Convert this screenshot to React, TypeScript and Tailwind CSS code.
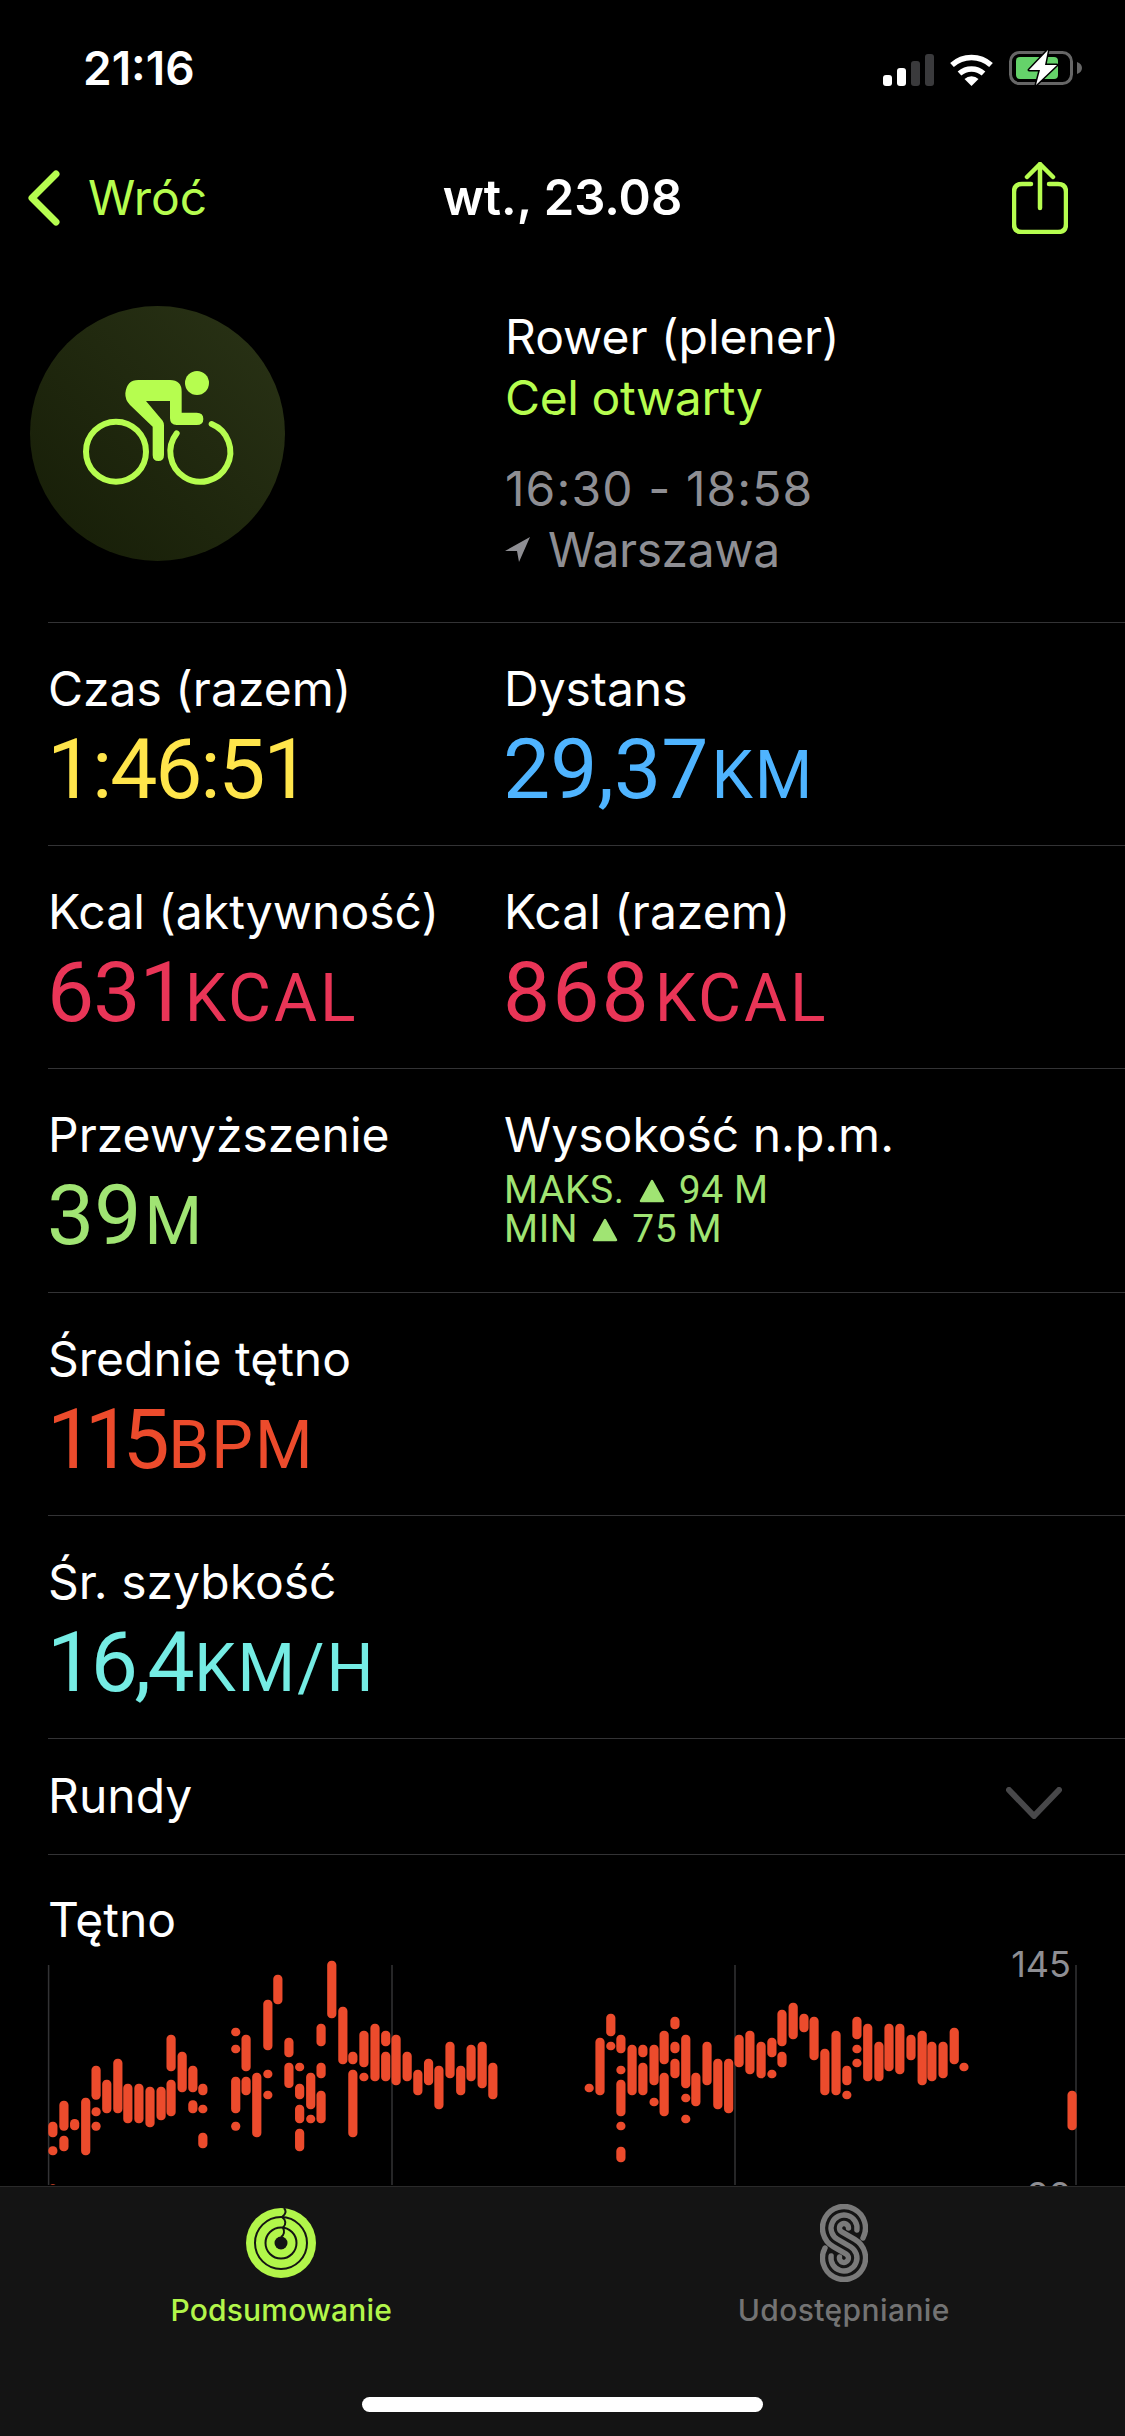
import React from 'react';

const left: [number, number, number][] = [
  [148, 548, 595], [148, 622, 649], [148, 736, 760], [179, 485, 575], [179, 590, 637], [209, 540, 574], [240, 476, 649],
  [269, 380, 482], [269, 505, 532], [269, 548, 575], [299, 422, 523], [330, 359, 523], [358, 434, 553],
  [389, 434, 553], [420, 443, 565], [451, 443, 544], [479, 287, 397], [479, 422, 532], [510, 338, 460],
  [540, 380, 460], [540, 484, 523], [568, 434, 469], [568, 497, 523], [568, 581, 628], [660, 266, 292],
  [660, 317, 343], [660, 413, 523], [660, 548, 575], [689, 287, 397], [689, 413, 469], [719, 401, 595],
  [750, 182, 334], [750, 392, 418], [750, 455, 481], [778, 107, 196], [809, 296, 355], [809, 371, 447],
  [839, 371, 397], [839, 434, 481], [839, 497, 553], [839, 569, 637], [870, 401, 511], [870, 527, 553],
  [899, 254, 322], [899, 371, 418], [899, 455, 553], [929, 65, 238], [960, 203, 376], [988, 338, 376],
  [988, 392, 595], [1019, 275, 385], [1019, 401, 427], [1050, 254, 427], [1080, 275, 322], [1080, 338, 427],
  [1109, 287, 439], [1140, 338, 427], [1170, 392, 469], [1200, 359, 439], [1229, 380, 511], [1260, 308, 418],
  [1290, 380, 469], [1319, 317, 427], [1350, 308, 448], [1380, 371, 481],
];

const right: [number, number, number][] = [
  [81, 434, 460], [111, 296, 469], [141, 224, 292], [141, 308, 334], [169, 287, 343], [169, 380, 406],
  [169, 422, 532], [169, 548, 574], [169, 623, 670], [200, 317, 469], [230, 317, 355], [230, 371, 469],
  [261, 317, 439], [261, 476, 502], [289, 275, 376], [289, 401, 532], [319, 233, 271], [319, 308, 343],
  [319, 359, 418], [349, 287, 448], [349, 464, 490], [349, 527, 553], [377, 401, 502], [408, 308, 439],
  [438, 359, 511], [468, 359, 523], [497, 287, 385], [527, 275, 406], [558, 308, 418], [588, 296, 355],
  [588, 392, 418], [616, 212, 322], [616, 338, 385], [647, 191, 301], [677, 224, 280], [705, 233, 364],
  [735, 329, 469], [766, 275, 469], [796, 380, 439], [796, 455, 481], [824, 233, 301], [824, 317, 343],
  [824, 359, 385], [854, 254, 427], [885, 308, 427], [913, 254, 397], [943, 254, 406], [974, 287, 364],
  [1005, 275, 439], [1032, 308, 427], [1063, 308, 418], [1094, 266, 376], [1121, 371, 397], [1421, 455, 574],
];

// bars in page coordinates
const bars = [
  ...left.map(([x, t, b]) => ({ x: x / 2.8, t: 1940 + t / 3, b: 1940 + b / 3 })),
  ...right.map(([x, t, b]) => ({ x: 560 + x / 2.775, t: 1940 + t / 3, b: 1940 + b / 3 })),
];

function Metric({
  label,
  value,
  unit,
  color,
  tight = 'tracking-[0px]',
  unitClass = 'ml-[3px] tracking-[2px]',
}: {
  label: string;
  value: string;
  unit?: string;
  color: string;
  tight?: string;
  unitClass?: string;
}) {
  return (
    <div>
      <div className="text-[48px] leading-[61px]">{label}</div>
      <div className={`ml-[-1px] mt-[9px] [font-family:Roboto,sans-serif] text-[84px] leading-[84px] ${tight} ${color}`}>
        {value}
        {unit && <span className={`text-[66px] ${unitClass}`}>{unit}</span>}
      </div>
    </div>
  );
}

function Row({ children }: { children: React.ReactNode }) {
  return (
    <div className="ml-[48px] grid h-[223.2px] grid-cols-[456px_1fr] border-t border-[#333335] pt-[35px]">
      {children}
    </div>
  );
}

function Triangle() {
  return (
    <svg width="26" height="24" viewBox="0 0 26 24" className="mx-[14px]">
      <path d="M13 2 L24 22 H2 Z" fill="#a0e473" stroke="#a0e473" strokeWidth="2.5" strokeLinejoin="round" />
    </svg>
  );
}

function StatusIcons() {
  return (
    <div className="flex items-end gap-[15px]">
      <svg width="51" height="32" viewBox="0 0 51 32">
        <rect x="0" y="21" width="9" height="11" rx="3" fill="#fff" />
        <rect x="14" y="14" width="9" height="18" rx="3" fill="#fff" />
        <rect x="28" y="7" width="9" height="25" rx="3" fill="#3a3a3c" />
        <rect x="42" y="0" width="9" height="32" rx="3" fill="#3a3a3c" />
      </svg>
      <svg width="45" height="32" viewBox="0 0 45 32">
        <path d="M3 11 A29 29 0 0 1 42 11" fill="none" stroke="#fff" strokeWidth="5.5" />
        <path d="M10.5 19.5 A18 18 0 0 1 34.5 19.5" fill="none" stroke="#fff" strokeWidth="5.5" />
        <path d="M22.5 32 L15.5 25 A10 10 0 0 1 29.5 25 Z" fill="#fff" />
      </svg>
      <svg width="73" height="35" viewBox="0 0 73 35" className="overflow-visible">
        <rect x="1.5" y="1.5" width="61" height="31" rx="9" fill="none" stroke="#666" strokeWidth="3" />
        <rect x="7" y="6" width="42" height="22" rx="4" fill="#65d26a" />
        <path d="M68 11 C71 12 73 14 73 17 C73 20 71 22 68 23 Z" fill="#666" />
        <path d="M39 -1 L20 19 H31 L27 34 L48 14 H36 Z" fill="#fff" stroke="#000" strokeWidth="3" paintOrder="stroke" strokeLinejoin="round" />
      </svg>
    </div>
  );
}

function BikeBadge() {
  return (
    <div className="flex size-[255px] shrink-0 items-center justify-center rounded-full bg-linear-to-tr from-[#161d07] to-[#2a3316]">
      <svg width="255" height="255" viewBox="90 78 765 765">
        <circle cx="348" cy="515" r="90" fill="none" stroke="#b6fd4f" strokeWidth="18" />
        <path d="M530 460 A90 90 0 1 0 635 432" fill="none" stroke="#b6fd4f" strokeWidth="18" strokeLinecap="round" />
        <circle cx="591" cy="309" r="36" fill="#b6fd4f" />
        <path
          d="M415 300 H510 Q545 300 545 335 V398 H590 Q610 398 610 417 Q610 435 590 435 H530 Q510 435 510 415 V363 H438 L488 422 Q492 428 492 436 V525 Q492 543 475 543 Q458 543 458 525 V440 L390 375 Q375 360 376 340 Q380 300 415 300 Z"
          fill="#b6fd4f"
        />
      </svg>
    </div>
  );
}

function RingIcon() {
  const gap = '#141414';
  return (
    <svg width="70" height="70" viewBox="0 0 70 70">
      <circle cx="35" cy="35" r="35" fill="#b2f64a" />
      <circle cx="35" cy="35" r="26" fill="none" stroke={gap} strokeWidth="2" />
      <circle cx="35" cy="35" r="15.5" fill="none" stroke={gap} strokeWidth="2" />
      <circle cx="35" cy="35" r="6.5" fill={gap} />
      <path d="M38 0 C40.5 3 40 6 36 9" fill="none" stroke={gap} strokeWidth="2" />
      <path d="M36 9 C40 12 40.5 16 37 19.5" fill="none" stroke={gap} strokeWidth="2" />
      <path d="M37 19.5 C39 24 38 27 35 29" fill="none" stroke={gap} strokeWidth="2" />
    </svg>
  );
}

function SharingIcon() {
  const paths = [
    'M43 34 A21.5 21.5 0 1 0 13.25 42.62 L26.25 50.1 A4.5 4.5 0 1 1 19.5 53',
    'M36.9 26 A13 13 0 1 0 17.5 35.26 L30.5 42.74 A13 13 0 1 1 11.1 52',
    'M28.5 24 A4.5 4.5 0 1 0 21.75 27.9 L34.75 35.38 A21.5 21.5 0 1 1 5 44',
  ];
  return (
    <svg width="48" height="78" viewBox="0 0 48 78">
      {paths.map(d => (
        <path key={d} d={d} fill="none" stroke="#7a7a7a" strokeWidth="5.4" strokeLinecap="round" />
      ))}
    </svg>
  );
}

export default function App() {
  return (
    <div className="relative h-[2436px] w-[1125px] overflow-hidden bg-black text-white [font-family:Inter,sans-serif]">
      {/* Status bar */}
      <div className="flex h-[136px] items-center justify-between pl-[83px] pr-[43px]">
        <span className="text-[46px] font-semibold">21:16</span>
        <StatusIcons />
      </div>

      {/* Nav */}
      <div className="grid h-[124px] grid-cols-[1fr_auto_1fr] items-center px-[28px]">
        <div className="flex items-center gap-[28px] text-[#b6fd4f]">
          <svg width="32" height="56" viewBox="0 0 32 56">
            <path d="M28 4 L4 28 L28 52" fill="none" stroke="#b6fd4f" strokeWidth="7" strokeLinecap="round" strokeLinejoin="round" />
          </svg>
          <span className="text-[48px]">Wróć</span>
        </div>
        <span className="text-[49px] font-semibold">wt., 23.08</span>
        <div className="flex justify-end pr-[29px]">
          <svg width="56" height="72" viewBox="0 0 56 72">
            <path d="M19 22 H10 Q2 22 2 30 V62 Q2 70 10 70 H46 Q54 70 54 62 V30 Q54 22 46 22 H37" fill="none" stroke="#b6fd4f" strokeWidth="4.5" strokeLinecap="round" />
            <path d="M28 46 V2 M15 15 L28 2 L41 15" fill="none" stroke="#b6fd4f" strokeWidth="4.5" strokeLinecap="round" strokeLinejoin="round" />
          </svg>
        </div>
      </div>

      {/* Workout header */}
      <div className="flex h-[362px] pl-[30px] pt-[46px]">
        <BikeBadge />
        <div className="ml-[220px] text-[48px] leading-[61px]">
          <div>Rower (plener)</div>
          <div className="tracking-[-0.4px] text-[#b6fd4f]">Cel otwarty</div>
          <div className="mt-[30px] tracking-[1.1px] text-[#8e8e93]">16:30 - 18:58</div>
          <div className="flex items-center gap-[18px] tracking-[-0.4px] text-[#8e8e93]">
            <svg width="25" height="25" viewBox="0 0 25 25">
              <path d="M25 0 L0 14 H12 L14 25 Z" fill="#8e8e93" />
            </svg>
            Warszawa
          </div>
        </div>
      </div>

      {/* Metrics */}
      <Row>
        <Metric label="Czas (razem)" value="1:46:51" color="text-[#ffe54b]" tight="tracking-[-2.2px]" />
        <Metric label="Dystans" value="29,37" unit="KM" color="text-[#4fb4ff]" />
      </Row>
      <Row>
        <Metric label="Kcal (aktywność)" value="631" unit="KCAL" color="text-[#e93557]" tight="tracking-[-1px]" unitClass="ml-[-1px] tracking-[3px]" />
        <Metric label="Kcal (razem)" value="868" unit="KCAL" color="text-[#e93557]" tight="tracking-[2px]" unitClass="ml-[4px] tracking-[3px]" />
      </Row>
      <Row>
        <Metric label="Przewyższenie" value="39" unit="M" color="text-[#a0e473]" />
        <div>
          <div className="text-[48px] leading-[61px]">Wysokość n.p.m.</div>
          <div className="mt-[6px] [font-family:Roboto,sans-serif] text-[39px] leading-[39px] tracking-[0.6px] text-[#a0e473]">
            <div className="flex items-center">MAKS.<Triangle />94 M</div>
            <div className="flex items-center">MIN<Triangle />75 M</div>
          </div>
        </div>
      </Row>
      <Row>
        <Metric label="Średnie tętno" value="115" unit="BPM" color="text-[#ec4b2c]" tight="tracking-[-9.5px]" unitClass="ml-[8px] tracking-[2px]" />
      </Row>
      <Row>
        <Metric label="Śr. szybkość" value="16,4" unit="KM/H" color="text-[#75ece4]" tight="tracking-[-3.5px]" />
      </Row>

      <div className="ml-[48px] flex h-[117px] items-center justify-between border-b border-t border-[#333335] pr-[63px]">
        <span className="text-[48px]">Rundy</span>
        <svg width="56" height="32" viewBox="0 0 56 32" className="mt-[14px]">
          <path d="M3 3 L28 29 L53 3" fill="none" stroke="#48484a" strokeWidth="6" strokeLinecap="round" strokeLinejoin="round" />
        </svg>
      </div>

      {/* Heart rate chart */}
      <div className="pl-[48px] pt-[34px] text-[48px] leading-[61px]">Tętno</div>
      <div className="relative">
        <svg width="1125" height="235" viewBox="0 1951 1125 235" className="block">
          {[48.6, 392, 735, 1076].map(x => (
            <rect key={x} x={x - 0.75} y="1966" width="1.5" height="220" fill="#333335" />
          ))}
          {bars.map((b, i) => (
            <rect key={i} x={b.x - 4.6} y={b.t} width="9.2" height={b.b - b.t} rx="4.3" fill="#ec4b2c" />
          ))}
        </svg>
        <span className="absolute right-[54px] top-[-6px] text-[36px] leading-[41px] text-[#8e8e93]">145</span>
        <span className="absolute right-[54px] top-[225px] text-[36px] leading-[41px] text-[#8e8e93]">88</span>
      </div>

      {/* Tab bar */}
      <div className="absolute inset-x-0 bottom-0 h-[250px] border-t border-[#2a2a2a] bg-[#141414] pt-[17px]">
        <div className="grid grid-cols-2">
          <div className="flex flex-col items-center">
            <div className="flex h-[78px] items-center"><RingIcon /></div>
            <span className="mt-[10px] text-[30px] font-medium leading-[36px] tracking-[0.2px] text-[#b2f64a]">Podsumowanie</span>
          </div>
          <div className="flex flex-col items-center">
            <div className="flex h-[78px] items-center"><SharingIcon /></div>
            <span className="mt-[10px] text-[30px] font-medium leading-[36px] tracking-[0.4px] text-[#737373]">Udostępnianie</span>
          </div>
        </div>
        <div className="mx-auto mt-[69px] h-[15px] w-[401px] rounded-full bg-white" />
      </div>
    </div>
  );
}
